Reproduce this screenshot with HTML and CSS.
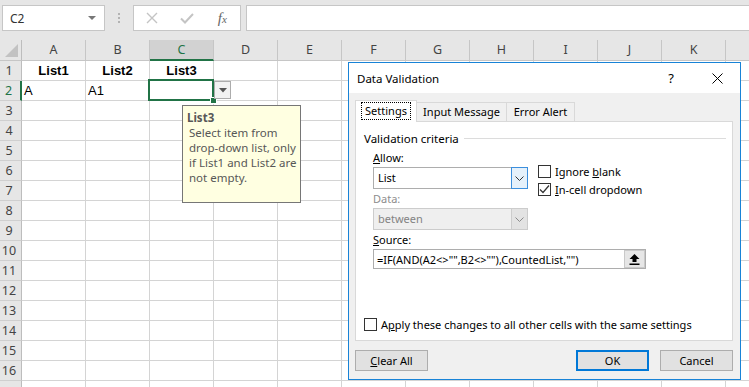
FILE: index.html
```html
<!DOCTYPE html>
<html lang="en">
<head>
    <meta charset="UTF-8">
    <title>Data Validation</title>
    <link rel="stylesheet" href="styles.css">
</head>
<body>
    <div class="toolbar">
        <div class="namebox"><span>C2</span><span class="nb-arrow"></span></div>
        <div class="grip"><i></i><i></i><i></i></div>
        <div class="fxbox">
            <span class="fx-btn">
                <svg width="12" height="12" viewBox="0 0 12 12"><path d="M1 1L11 11M11 1L1 11" stroke="#c4c4c4" stroke-width="1.4" fill="none"/></svg>
            </span>
            <span class="fx-btn">
                <svg width="14" height="12" viewBox="0 0 14 12"><path d="M1 6.5L5 10.5L13 2" stroke="#c4c4c4" stroke-width="2" fill="none"/></svg>
            </span>
            <span class="fx-btn fx">f<small>x</small></span>
        </div>
        <div class="formula"></div>
    </div>

    <div class="sheet" id="sheet"></div>

    <div class="selection"><span class="handle"></span></div>
    <div class="cell-drop">
        <svg width="8" height="5" viewBox="0 0 8 5"><path d="M0 0H8L4 4.5Z" fill="#555"/></svg>
    </div>

    <div class="tip">
        <div class="tip-title">List3</div>
        <div class="tip-text">Select item from<br>drop-down list, only<br>if List1 and List2 are<br>not empty.</div>
    </div>

    <div class="dialog">
        <div class="dlg-title">
            <span>Data Validation</span>
            <span class="cap-btn help">?</span>
            <span class="cap-btn">
                <svg width="11" height="11" viewBox="0 0 11 11"><path d="M0.5 0.5L10.5 10.5M10.5 0.5L0.5 10.5" stroke="#000" stroke-width="1" fill="none"/></svg>
            </span>
        </div>
        <div class="dlg-body">
            <div class="tabs">
                <div class="tab active" style="width:62px"><span class="focus">Settings</span></div>
                <div class="tab" style="width:91px">Input Message</div>
                <div class="tab" style="width:69px">Error Alert</div>
            </div>
            <div class="panel">
                <div class="group-head">Validation criteria</div>
                <div class="criteria">
                    <div class="crit-top">
                        <div class="crit-left">
                            <div class="field-label"><u>A</u>llow:</div>
                            <div class="combo">
                                <span class="combo-value">List</span>
                                <span class="combo-btn hot">
                                    <svg width="9" height="5" viewBox="0 0 9 5"><path d="M0.5 0.5L4.5 4.5L8.5 0.5" stroke="#333" stroke-width="1" fill="none"/></svg>
                                </span>
                            </div>
                            <div class="field-label off">Data:</div>
                            <div class="combo off">
                                <span class="combo-value">between</span>
                                <span class="combo-btn">
                                    <svg width="9" height="5" viewBox="0 0 9 5"><path d="M0.5 0.5L4.5 4.5L8.5 0.5" stroke="#8a8a8a" stroke-width="1" fill="none"/></svg>
                                </span>
                            </div>
                        </div>
                        <div class="crit-right">
                            <label class="check"><span class="box"></span><span>Ignore <u>b</u>lank</span></label>
                            <label class="check"><span class="box">
                                <svg width="11" height="11" viewBox="0 0 11 11"><path d="M1 5.5L4 8.5L10 1.5" stroke="#333" stroke-width="1.2" fill="none"/></svg>
                            </span><span><u>I</u>n-cell dropdown</span></label>
                        </div>
                    </div>
                    <div class="field-label src-label"><u>S</u>ource:</div>
                    <div class="source">
                        <span class="source-value">=IF(AND(A2&lt;&gt;"",B2&lt;&gt;""),CountedList,"")</span>
                        <span class="source-btn">
                            <svg width="11" height="12" viewBox="0 0 11 12"><path d="M5.5 1L10.5 6H7.5V9H3.5V6H0.5Z" fill="#000"/><rect x="0.5" y="10.5" width="10" height="1.5" fill="#000"/></svg>
                        </span>
                    </div>
                </div>
                <label class="check apply"><span class="box"></span><span>A<u>p</u>ply these changes to all other cells with the same settings</span></label>
            </div>
            <div class="buttons">
                <button type="button"><u>C</u>lear All</button>
                <button type="button" class="default">OK</button>
                <button type="button">Cancel</button>
            </div>
        </div>
    </div>

    <script>
        // column L and row 17 are only partly on screen, so they carry no label
        const cols = 'ABCDEFGHIJK'.split('').concat(['']);
        const cells = {
            '1A': ['List1', 'hd'],
            '1B': ['List2', 'hd'],
            '1C': ['List3', 'hd'],
            '2A': ['A', ''],
            '2B': ['A1', '']
        };

        let html = '<div class="corner"><span class="corner-tri"></span></div>';
        cols.forEach(c => {
            html += `<div class="colhead${c === 'C' ? ' is-sel' : ''}">${c}</div>`;
        });
        for (let r = 1; r <= 17; r++) {
            html += `<div class="rowhead${r === 2 ? ' is-sel' : ''}">${r < 17 ? r : ''}</div>`;
            cols.forEach(c => {
                const v = cells[r + c];
                html += `<div class="cell${v && v[1] ? ' ' + v[1] : ''}">${v ? v[0] : ''}</div>`;
            });
        }
        document.getElementById('sheet').innerHTML = html;
    </script>
</body>
</html>
```

FILE: styles.css
```css
body {
    margin: 0;
    width: 749px;
    height: 387px;
    overflow: hidden;
    position: relative;
    background-color: #fff;
    font-family: "Noto Sans", Arial, sans-serif;
}

/* formula bar */
.toolbar {
    height: 40px;
    background-color: #e6e6e6;
    display: flex;
    align-items: flex-start;
    padding: 5px 0 0 2px;
    box-sizing: border-box;
}
.namebox {
    width: 103px;
    height: 26px;
    box-sizing: border-box;
    border: 1px solid #c6c6c6;
    background-color: #fff;
    display: flex;
    align-items: center;
    justify-content: space-between;
    padding: 0 8px 0 7px;
    font-size: 12px;
    color: #333;
}
.nb-arrow {
    width: 0;
    height: 0;
    border-left: 4px solid transparent;
    border-right: 4px solid transparent;
    border-top: 4px solid #777;
}
.grip {
    width: 28px;
    height: 26px;
    display: flex;
    flex-direction: column;
    align-items: center;
    justify-content: center;
    gap: 2px;
}
.grip i {
    width: 2px;
    height: 2px;
    background-color: #b3b3b3;
}
.fxbox {
    width: 108px;
    height: 26px;
    box-sizing: border-box;
    border: 1px solid #c6c6c6;
    background-color: #fff;
    display: flex;
    align-items: center;
}
.fx-btn {
    width: 36px;
    display: flex;
    justify-content: center;
    align-items: center;
}
.fx {
    font-family: "Liberation Serif", serif;
    font-style: italic;
    font-size: 15px;
    color: #666;
}
.fx small {
    font-size: 11px;
    position: relative;
    top: 1px;
}
.formula {
    flex: 1;
    height: 26px;
    margin-left: 5px;
    box-sizing: border-box;
    border: 1px solid #c6c6c6;
    border-right: none;
    background-color: #fff;
}

/* grid */
.sheet {
    display: grid;
    grid-template-columns: 22px repeat(12, 64px);
    grid-template-rows: 21px;
    grid-auto-rows: 20px;
    height: 347px;
    overflow: hidden;
}
.corner, .colhead, .rowhead, .cell {
    box-sizing: border-box;
}
.corner {
    background-color: #e6e6e6;
    border-right: 1px solid #bdbdbd;
    border-bottom: 1px solid #c6c6c6;
    display: flex;
    align-items: flex-end;
    justify-content: flex-end;
    padding: 0 3px 3px 0;
}
.corner-tri {
    width: 0;
    height: 0;
    border-left: 13px solid transparent;
    border-bottom: 13px solid #c2c2c2;
}
.colhead {
    background-color: #e6e6e6;
    border-right: 1px solid #c6c6c6;
    border-bottom: 1px solid #c6c6c6;
    color: #444;
    font-size: 12.5px;
    text-align: center;
    line-height: 20px;
}
.colhead.is-sel {
    background-color: #d2d2d2;
    color: #217346;
    border-bottom: 2px solid #217346;
}
.rowhead {
    background-color: #e6e6e6;
    border-right: 1px solid #bdbdbd;
    border-bottom: 1px solid #cfcfcf;
    color: #444;
    font-size: 12.5px;
    text-align: center;
    line-height: 19px;
    padding-right: 3px;
}
.rowhead.is-sel {
    color: #217346;
    border-right: 2px solid #217346;
}
.cell {
    border-right: 1px solid #d4d4d4;
    border-bottom: 1px solid #d4d4d4;
    font-family: "Liberation Sans", Arial, sans-serif;
    font-size: 13px;
    line-height: 20px;
    padding: 0 2px;
    white-space: nowrap;
    color: #000;
}
.cell.hd {
    font-weight: bold;
    text-align: center;
}

/* selection + in-cell dropdown (overlays) */
.selection {
    position: absolute;
    left: 148px;
    top: 79px;
    width: 66px;
    height: 22px;
    box-sizing: border-box;
    border: 2px solid #217346;
}
.handle {
    position: absolute;
    right: -5px;
    bottom: -5px;
    width: 5px;
    height: 5px;
    background-color: #217346;
    border: 1px solid #fff;
}
.cell-drop {
    position: absolute;
    left: 214px;
    top: 81px;
    width: 17px;
    height: 18px;
    box-sizing: border-box;
    border: 1px solid #acacac;
    background-color: #f2f2f2;
    display: flex;
    align-items: center;
    justify-content: center;
}

/* input message tooltip */
.tip {
    position: absolute;
    left: 182px;
    top: 105px;
    width: 119px;
    height: 98px;
    box-sizing: border-box;
    border: 1px solid #767676;
    background-color: #ffffe1;
    color: #575757;
    font-size: 11.5px;
    line-height: 15px;
    padding: 4px 0 0 4px;
}
.tip-title {
    font-weight: bold;
}
.tip-text {
    padding-left: 2px;
}

/* dialog */
.dialog {
    position: absolute;
    left: 348px;
    top: 62px;
    width: 393px;
    height: 318px;
    box-sizing: border-box;
    border: 1px solid #1883d7;
    background-color: #f0f0f0;
    font-size: 11px;
    color: #000;
}
.dlg-title {
    height: 30px;
    background-color: #fff;
    display: flex;
    align-items: center;
    padding-left: 8px;
    font-size: 11.5px;
}
.cap-btn {
    width: 46px;
    height: 30px;
    display: flex;
    align-items: center;
    justify-content: center;
}
.cap-btn.help {
    margin-left: auto;
    font-size: 13px;
}
.dlg-body {
    padding: 7px 7px 0 6px;
}
.tabs {
    display: flex;
    align-items: flex-end;
    height: 21px;
}
.tab {
    height: 19px;
    box-sizing: border-box;
    border: 1px solid #d9d9d9;
    border-bottom: none;
    background-color: #f0f0f0;
    text-align: center;
    line-height: 18px;
    margin-right: -1px;
}
.tab.active {
    height: 22px;
    margin-bottom: -1px;
    background-color: #fff;
    position: relative;
    z-index: 1;
    padding-top: 3px;
    line-height: 14px;
}
.focus {
    outline: 1px dotted #000;
    padding: 0 3px 1px;
}
.panel {
    height: 220px;
    box-sizing: border-box;
    border: 1px solid #d9d9d9;
    background-color: #fff;
    display: flex;
    flex-direction: column;
    padding: 0 6px 8px 8px;
}
.group-head {
    display: flex;
    align-items: center;
    gap: 5px;
    margin-top: 8px;
    height: 16px;
    font-size: 11.5px;
}
.group-head::after {
    content: "";
    flex: 1;
    border-top: 1px solid #dcdcdc;
}
.criteria {
    padding-left: 9px;
}
.crit-top {
    display: flex;
    gap: 10px;
}
.crit-left {
    width: 155px;
}
.crit-right {
    padding-top: 19px;
    display: flex;
    flex-direction: column;
    gap: 5px;
}
.field-label {
    margin-top: 2px;
    line-height: 16px;
}
.crit-left .field-label:first-child {
    margin-top: 4px;
}
.field-label.off {
    color: #8d8d8d;
}
.combo {
    margin-top: 1px;
    height: 22px;
    box-sizing: border-box;
    border: 1px solid #adadad;
    border-right: none;
    display: flex;
    background-color: #fff;
}
.combo-value {
    flex: 1;
    padding-left: 4px;
    line-height: 20px;
}
.combo-btn {
    width: 17px;
    margin: -1px 0;
    box-sizing: border-box;
    border: 1px solid #adadad;
    display: flex;
    align-items: center;
    justify-content: center;
}
.combo-btn.hot {
    border-color: #3c8fdd;
    background-color: #e5f1fb;
}
.combo.off {
    background-color: #efefef;
    border-color: #cccccc;
    color: #838383;
}
.combo.off .combo-btn {
    border-color: #cccccc;
    background-color: #e3e3e3;
}
.check {
    display: flex;
    align-items: center;
    gap: 4px;
    height: 13px;
    white-space: nowrap;
}
.box {
    width: 13px;
    height: 13px;
    box-sizing: border-box;
    border: 1px solid #333;
    background-color: #fff;
    display: flex;
    align-items: center;
    justify-content: center;
    flex-shrink: 0;
}
.source {
    margin-top: 1px;
    width: 273px;
    height: 20px;
    box-sizing: border-box;
    border: 1px solid #adadad;
    display: flex;
    align-items: center;
}
.source-value {
    flex: 1;
    padding-left: 3px;
    white-space: nowrap;
}
.source-btn {
    width: 21px;
    height: 18px;
    box-sizing: border-box;
    border: 1px solid #c9c9c9;
    background-color: #e6e6e6;
    display: flex;
    align-items: center;
    justify-content: center;
}
.apply {
    margin-top: auto;
    margin-bottom: 1px;
}
.buttons {
    display: flex;
    margin-top: 9px;
    gap: 11px;
}
.buttons button {
    width: 73px;
    height: 21px;
    box-sizing: border-box;
    border: 1px solid #adadad;
    background-color: #e1e1e1;
    font-family: inherit;
    font-size: 11px;
    color: #000;
    padding: 0;
}
.buttons button.default {
    margin-left: auto;
    border: 2px solid #0078d7;
}
```
